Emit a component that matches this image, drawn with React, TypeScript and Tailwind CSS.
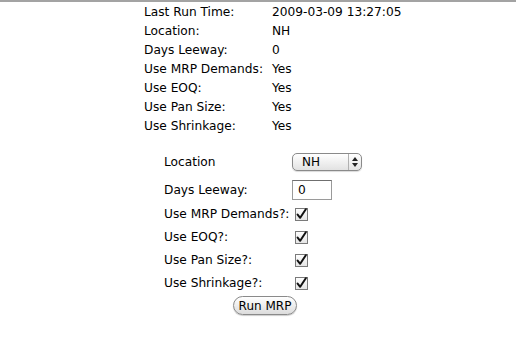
const summary: [string, string][] = [
  ['Last Run Time:', '2009-03-09 13:27:05'],
  ['Location:', 'NH'],
  ['Days Leeway:', '0'],
  ['Use MRP Demands:', 'Yes'],
  ['Use EOQ:', 'Yes'],
  ['Use Pan Size:', 'Yes'],
  ['Use Shrinkage:', 'Yes'],
];

const flags = ['Use MRP Demands?:', 'Use EOQ?:', 'Use Pan Size?:', 'Use Shrinkage?:'];

function Check() {
  return (
    <svg width="13" height="13" viewBox="0 0 13 13" className="block">
      <defs>
        <linearGradient id="cb" x1="0" y1="0" x2="0" y2="1">
          <stop offset="0" stopColor="#ffffff" />
          <stop offset="1" stopColor="#e4e4e4" />
        </linearGradient>
      </defs>
      <rect x="0.5" y="0.5" width="12" height="12" fill="url(#cb)" stroke="#7a7a7a" />
      <path d="M2.6 6.6 L5.2 9.8 L10.8 1.2" fill="none" stroke="#111" strokeWidth="2" strokeLinecap="round" strokeLinejoin="round" />
    </svg>
  );
}

function Select() {
  return (
    <div className="flex items-center w-[70px] h-[18px] rounded-[5px] border border-[#8a8a8a] bg-gradient-to-b from-white to-[#e2e2e2] shadow-[0_1px_1px_rgba(0,0,0,0.15)]">
      <span className="flex-1 pl-[9px] text-[12px] leading-none">NH</span>
      <span className="w-[13px] h-full border-l border-[#b0b0b0] flex flex-col items-center justify-center gap-[2px]">
        <svg width="6" height="4" viewBox="0 0 6 4"><path d="M0 4 L3 0 L6 4Z" fill="#222" /></svg>
        <svg width="6" height="4" viewBox="0 0 6 4"><path d="M0 0 L3 4 L6 0Z" fill="#222" /></svg>
      </span>
    </div>
  );
}

export default function App() {
  return (
    <div className="w-[516px] h-[340px] bg-white border-t-2 border-[#a3a3a3] text-[12.2px] text-black font-['DejaVu_Sans',Verdana,sans-serif]">
      <div className="pl-[144px] pt-[1px]">
        {summary.map(([k, v]) => (
          <div key={k} className="flex h-[19px] items-center">
            <span className="w-[128px]">{k}</span>
            <span>{v}</span>
          </div>
        ))}
      </div>

      <div className="pl-[164px] pt-[17px]">
        <div className="flex h-[18px] items-center">
          <span className="w-[128px]">Location</span>
          <Select />
        </div>
        <div className="flex h-[20px] items-center mt-[9px]">
          <span className="w-[128px]">Days Leeway:</span>
          <div className="w-[40px] h-[20px] border border-[#9a9a9a] border-t-[#6f6f6f] pl-[5px] flex items-center">0</div>
        </div>
        {flags.map((f) => (
          <div key={f} className="flex h-[18px] items-center mt-[5px]">
            <span className="w-[128px]">{f}</span>
            <span className="pl-[3px]"><Check /></span>
          </div>
        ))}
      </div>

      <div className="flex justify-center pt-[4px]">
        <button className="ml-[14px] h-[19px] w-[64px] rounded-full border border-[#8a8a8a] bg-gradient-to-b from-white to-[#dcdcdc] text-[12px] leading-none shadow-[0_1px_1px_rgba(0,0,0,0.2)]">
          Run MRP
        </button>
      </div>
    </div>
  );
}
